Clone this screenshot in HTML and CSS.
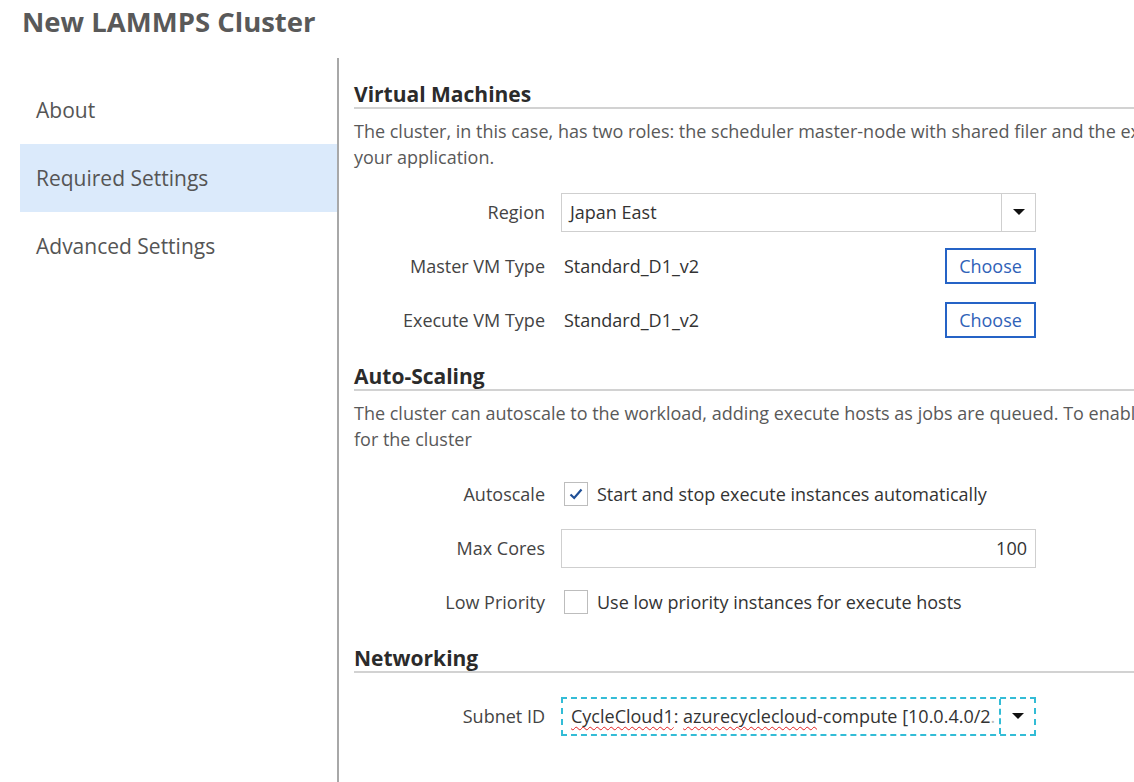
FILE: index.html
```html
<!DOCTYPE html>
<html>
<head>
<meta charset="utf-8">
<link rel="stylesheet" href="styles.css">
</head>
<body>
<div class="page">
  <header class="title">New LAMMPS Cluster</header>
  <div class="layout">
    <nav class="sidebar">
      <div class="nav-item">About</div>
      <div class="nav-item active">Required Settings</div>
      <div class="nav-item">Advanced Settings</div>
    </nav>
    <main class="content">
      <section class="section">
        <h2 class="heading">Virtual Machines</h2>
        <p class="desc">The cluster, in this case, has two roles: the scheduler master-node with shared filer and the execute hosts which run<br>your application.</p>
        <div class="form">
          <div class="label">Region</div>
          <div class="control">
            <div class="select">
              <span class="select-text">Japan East</span>
              <span class="select-btn"><span class="arrow"></span></span>
            </div>
          </div>
          <div class="label">Master VM Type</div>
          <div class="control split">
            <span class="value">Standard_D1_v2</span>
            <button class="choose">Choose</button>
          </div>
          <div class="label">Execute VM Type</div>
          <div class="control split">
            <span class="value">Standard_D1_v2</span>
            <button class="choose">Choose</button>
          </div>
        </div>
      </section>
      <section class="section">
        <h2 class="heading">Auto-Scaling</h2>
        <p class="desc">The cluster can autoscale to the workload, adding execute hosts as jobs are queued. To enable this check the box below<br>for the cluster</p>
        <div class="form">
          <div class="label">Autoscale</div>
          <div class="control">
            <span class="checkbox"><svg width="18" height="18" viewBox="0 0 18 18"><path d="M3.5 9.5 L7.2 13 L14.5 4.5" fill="none" stroke="#1f4f96" stroke-width="2.2"/></svg></span>
            <span class="check-label">Start and stop execute instances automatically</span>
          </div>
          <div class="label">Max Cores</div>
          <div class="control">
            <div class="input">100</div>
          </div>
          <div class="label">Low Priority</div>
          <div class="control">
            <span class="checkbox"></span>
            <span class="check-label">Use low priority instances for execute hosts</span>
          </div>
        </div>
      </section>
      <section class="section">
        <h2 class="heading">Networking</h2>
        <div class="form first">
          <div class="label">Subnet ID</div>
          <div class="control">
            <div class="select focus">
              <span class="select-text"><span class="typo">CycleCloud1</span>: <span class="typo">azurecyclecloud</span>-compute [10.0.4.0/2<span class="fade">.</span></span>
              <span class="select-btn"><span class="arrow"></span></span>
            </div>
          </div>
        </div>
      </section>
    </main>
  </div>
</div>
</body>
</html>
```

FILE: styles.css
```css
html, body {
  margin: 0;
  padding: 0;
  background: #ffffff;
  overflow: hidden;
}
body {
  width: 1134px;
  height: 782px;
  font-family: "Open Sans", "Noto Sans", "Liberation Sans", sans-serif;
  color: #444;
}
.page {
  width: 1134px;
  height: 782px;
  overflow: hidden;
}
.title {
  height: 58px;
  box-sizing: border-box;
  padding: 4px 0 0 22px;
  font-size: 27.5px;
  line-height: 36px;
  font-weight: 700;
  color: #595959;
}
.layout {
  display: flex;
  height: 724px;
}
.sidebar {
  width: 317px;
  flex: 0 0 317px;
  margin-left: 20px;
  padding-top: 18px;
  border-right: 2px solid #a8a8a8;
}
.nav-item {
  height: 68px;
  display: flex;
  align-items: center;
  padding-left: 16px;
  font-size: 21px;
  color: #555;
}
.nav-item.active {
  background: #dbeafb;
}
.content {
  flex: 0 0 auto;
  width: 1000px;
  padding-left: 15px;
  padding-top: 23px;
}
.section + .section {
  margin-top: 16px;
}
.heading {
  margin: 0;
  font-size: 21px;
  line-height: 26px;
  font-weight: 700;
  color: #2b2b2b;
  border-bottom: 2px solid #d2d2d2;
}
.desc {
  margin: 9px 0 0 0;
  font-size: 18px;
  line-height: 26px;
  color: #595959;
  white-space: nowrap;
}
.form {
  margin-top: 15px;
  display: grid;
  grid-template-columns: 191px 475px;
  grid-auto-rows: 54px;
  column-gap: 16px;
}
.form.first {
  margin-top: 16px;
}
.label {
  display: flex;
  align-items: center;
  justify-content: flex-end;
  font-size: 18px;
  color: #444;
}
.control {
  display: flex;
  align-items: center;
  font-size: 18px;
  color: #333;
}
.control.split {
  justify-content: space-between;
}
.value {
  padding-left: 3px;
}
.select {
  box-sizing: border-box;
  width: 475px;
  height: 39px;
  border: 1px solid #cfcfcf;
  display: flex;
  align-items: center;
  background: #fff;
}
.select-text {
  flex: 1;
  padding-left: 8px;
  line-height: 34px;
  white-space: nowrap;
  overflow: hidden;
  color: #333;
}
.select-btn {
  width: 33px;
  height: 100%;
  border-left: 1px solid #cfcfcf;
  display: flex;
  align-items: center;
  justify-content: center;
}
.arrow {
  width: 0;
  height: 0;
  border-left: 6px solid transparent;
  border-right: 6px solid transparent;
  border-top: 6px solid #111;
}
.select.focus {
  border: 2px dashed #33bcd6;
}
.select.focus .select-btn {
  border-left: 2px dashed #33bcd6;
}
.typo {
  text-decoration-line: underline;
  text-decoration-style: wavy;
  text-decoration-color: #e02020;
  text-decoration-thickness: 1px;
  text-underline-offset: 3px;
  text-decoration-skip-ink: none;
}
.fade {
  color: #bbb;
}
.choose {
  box-sizing: border-box;
  width: 91px;
  height: 36px;
  border: 2px solid #2563c6;
  background: #fff;
  color: #2f62b8;
  font-family: inherit;
  font-size: 18px;
  padding: 0;
}
.checkbox {
  box-sizing: border-box;
  width: 24px;
  height: 24px;
  margin-left: 3px;
  border: 1px solid #bdbdbd;
  background: #fff;
  display: flex;
  align-items: center;
  justify-content: center;
}
.check-label {
  margin-left: 9px;
  color: #333;
}
.input {
  box-sizing: border-box;
  width: 475px;
  height: 39px;
  border: 1px solid #cfcfcf;
  display: flex;
  align-items: center;
  justify-content: flex-end;
  padding-right: 8px;
  color: #333;
}
```
